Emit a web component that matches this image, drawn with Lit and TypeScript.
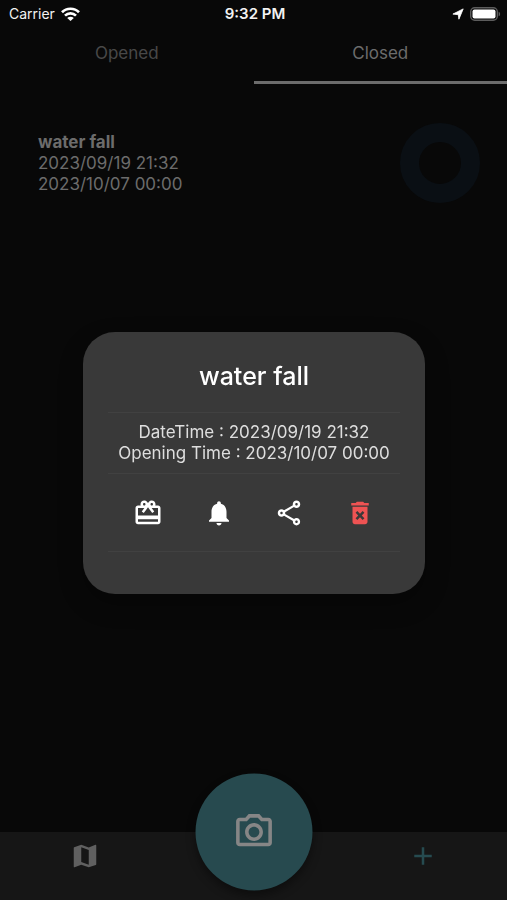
import { LitElement, html, css, svg } from "lit";
import { customElement, property, state } from "lit/decorators.js";
import { classMap } from "lit/directives/class-map.js";

const ICONS: Record<string, string> = {
  gift: "M20 6h-2.18c.11-.31.18-.65.18-1 0-1.66-1.34-3-3-3-1.05 0-1.96.54-2.5 1.35l-.5.67-.5-.68C10.96 2.54 10.05 2 9 2 7.34 2 6 3.34 6 5c0 .35.07.69.18 1H4c-1.11 0-1.99.89-1.99 2L2 19c0 1.11.89 2 2 2h16c1.11 0 2-.89 2-2V8c0-1.11-.89-2-2-2zm-5-2c.55 0 1 .45 1 1s-.45 1-1 1-1-.45-1-1 .45-1 1-1zM9 4c.55 0 1 .45 1 1s-.45 1-1 1-1-.45-1-1 .45-1 1-1zm11 15H4v-2h16v2zm0-5H4V8h5.08L7 10.83 8.62 12 11 8.76l1-1.36 1 1.36L15.38 12 17 10.83 14.92 8H20v6z",
  bell: "M12 22c1.1 0 2-.9 2-2h-4c0 1.1.89 2 2 2zm6-6v-5c0-3.07-1.64-5.64-4.5-6.32V4c0-.83-.67-1.5-1.5-1.5s-1.5.67-1.5 1.5v.68C7.63 5.36 6 7.92 6 11v5l-2 2v1h16v-1l-2-2z",
  share: "M18 16.08c-.76 0-1.44.3-1.96.77L8.91 12.7c.05-.23.09-.46.09-.7s-.04-.47-.09-.7l7.05-4.11c.54.5 1.25.81 2.04.81 1.66 0 3-1.34 3-3s-1.34-3-3-3-3 1.34-3 3c0 .24.04.47.09.7L8.04 9.81C7.5 9.31 6.79 9 6 9c-1.66 0-3 1.34-3 3s1.34 3 3 3c.79 0 1.5-.31 2.04-.81l7.12 4.16c-.05.21-.08.43-.08.65 0 1.61 1.31 2.92 2.92 2.92s2.92-1.31 2.92-2.92-1.31-2.92-2.92-2.92zM18 4c.55 0 1 .45 1 1s-.45 1-1 1-1-.45-1-1 .45-1 1-1zM6 13c-.55 0-1-.45-1-1s.45-1 1-1 1 .45 1 1-.45 1-1 1zm12 7.02c-.55 0-1-.45-1-1s.45-1 1-1 1 .45 1 1-.45 1-1 1z",
  trash: "M6 19c0 1.1.9 2 2 2h8c1.1 0 2-.9 2-2V7H6v12zm2.46-7.12l1.41-1.41L12 12.59l2.12-2.12 1.41 1.41L13.41 14l2.12 2.12-1.41 1.41L12 15.41l-2.12 2.12-1.41-1.41L10.59 14l-2.13-2.12zM15.5 4l-1-1h-5l-1 1H5v2h14V4z",
  camera: "M20 4h-3.17L15 2H9L7.17 4H4c-1.1 0-2 .9-2 2v12c0 1.1.9 2 2 2h16c1.1 0 2-.9 2-2V6c0-1.1-.9-2-2-2zm0 14H4V6h4.05l1.83-2h4.24l1.83 2H20v12zM12 7c-2.76 0-5 2.24-5 5s2.24 5 5 5 5-2.24 5-5-2.24-5-5-5zm0 8c-1.65 0-3-1.35-3-3s1.35-3 3-3 3 1.35 3 3-1.35 3-3 3z",
  map: "M20.5 3l-.16.03L15 5.1 9 3 3.36 4.9c-.21.07-.36.25-.36.48V20.5c0 .28.22.5.5.5l.16-.03L9 18.9l6 2.1 5.64-1.9c.21-.07.36-.25.36-.48V3.5c0-.28-.22-.5-.5-.5zM15 19l-6-2.11V5l6 2.11V19z",
  add: "M19 13h-6v6h-2v-6H5v-2h6V5h2v6h6v2z",
};

@customElement("app-icon")
export class AppIcon extends LitElement {
  @property() name = "";

  static styles = css`
    :host {
      display: block;
      width: 30px;
      height: 30px;
    }
    .glyph {
      display: block;
      width: 100%;
      height: 100%;
      fill: currentColor;
    }
  `;

  render() {
    return html`<svg class="glyph" viewBox="0 0 24 24" aria-hidden="true">
      ${svg`<path d=${ICONS[this.name] ?? ""}></path>`}
    </svg>`;
  }
}

@customElement("status-bar")
export class StatusBar extends LitElement {
  static styles = css`
    :host {
      display: grid;
      grid-template-columns: 1fr auto 1fr;
      align-items: center;
      height: 27px;
      padding: 0 6px 0 9px;
      box-sizing: border-box;
      color: #f2f2f2;
      font-size: 14px;
      line-height: 18px;
    }
    .side {
      display: flex;
      align-items: center;
      gap: 6px;
    }
    .end {
      justify-content: flex-end;
    }
    .time {
      font-size: 15px;
      font-weight: 600;
    }
    .wifi {
      width: 19px;
      height: 14px;
    }
    .arrow {
      width: 12px;
      height: 12px;
    }
    .battery {
      width: 31px;
      height: 14px;
    }
  `;

  render() {
    return html`
      <div class="side">
        <span>Carrier</span>
        <svg class="wifi" viewBox="0 0 19 14" aria-label="Wi-Fi">
          <g fill="none" stroke="#fff" stroke-width="2.7">
            <path d="M1 5.2C5.6.6 13.400.6 18 5.200"></path>
            <path d="M4 8.600C7.100 5.600 11.900 5.600 15 8.600"></path>
          </g>
          <path d="M9.500 14L6.200 10.900C8 9.200 11 9.200 12.800 10.900Z" fill="#fff"></path>
        </svg>
      </div>
      <span class="time">9:32 PM</span>
      <div class="side end">
        <svg class="arrow" viewBox="0 0 12 12" aria-label="Location">
          <path
            d="M11.200.9L6.900 11.200L6.300 6.700L.9 6.100Z"
            fill="#fff"
            stroke="#fff"
            stroke-width=".8"
            stroke-linejoin="round"
          ></path>
        </svg>
        <svg class="battery" viewBox="0 0 31 14" aria-label="Battery">
          <rect x=".7" y=".7" width="26.600" height="12.600" rx="4" fill="none" stroke="#5c5c5c" stroke-width="1.400"></rect>
          <rect x="2.500" y="2.500" width="23" height="9" rx="2" fill="#fff"></rect>
          <path d="M28.600 4.700C30.600 5.300 30.600 8.700 28.600 9.300Z" fill="#5c5c5c"></path>
        </svg>
      </div>
    `;
  }
}

interface Capsule {
  title: string;
  created: string;
  opens: string;
}

@customElement("capsule-dialog")
export class CapsuleDialog extends LitElement {
  @property({ attribute: false }) capsule!: Capsule;

  static styles = css`
    :host {
      display: block;
      box-sizing: border-box;
      padding: 0 25px 42px;
      border-radius: 32px;
      background: #393939;
      color: #fff;
      text-align: center;
      box-shadow: 0 10px 24px rgba(0, 0, 0, 0.3);
    }
    .title {
      margin: 0;
      padding: 28px 0 20px;
      font-size: 25px;
      line-height: 32px;
      font-weight: 500;
    }
    .times {
      padding: 9px 0;
      border-top: 1px solid #414141;
      border-bottom: 1px solid #414141;
      color: #dedede;
      font-size: 17px;
      line-height: 21px;
    }
    .line {
      margin: 0;
    }
    .actions {
      display: flex;
      justify-content: space-evenly;
      padding: 8px 0;
      border-bottom: 1px solid #414141;
    }
    .action {
      display: grid;
      place-items: center;
      width: 60px;
      height: 61px;
      padding: 0;
      border: 0;
      background: none;
      color: #fff;
    }
    .danger {
      color: #ee5353;
    }
  `;

  render() {
    const actions = [
      { icon: "gift", label: "Open" },
      { icon: "bell", label: "Remind" },
      { icon: "share", label: "Share" },
      { icon: "trash", label: "Delete" },
    ];
    return html`
      <h2 class="title">${this.capsule.title}</h2>
      <div class="times">
        <p class="line">DateTime : ${this.capsule.created}</p>
        <p class="line">Opening Time : ${this.capsule.opens}</p>
      </div>
      <div class="actions">
        ${actions.map(
          (a) => html`<button
            class=${classMap({ action: true, danger: a.icon === "trash" })}
            aria-label=${a.label}
          >
            <app-icon name=${a.icon}></app-icon>
          </button>`
        )}
      </div>
    `;
  }
}

@customElement("app-root")
export class AppRoot extends LitElement {
  @state() private tab = "Closed";

  private capsule: Capsule = {
    title: "water fall",
    created: "2023/09/19 21:32",
    opens: "2023/10/07 00:00",
  };

  static styles = css`
    :host {
      display: flex;
      flex-direction: column;
      min-height: 100vh;
      background: #080808;
      font-family: Inter, "Liberation Sans", sans-serif;
    }
    button {
      font-family: inherit;
    }
    .tabs {
      display: grid;
      grid-template-columns: 1fr 1fr;
    }
    .tab {
      height: 57px;
      padding: 0 0 2px;
      border: 0;
      border-bottom: 3px solid transparent;
      background: none;
      color: #484848;
      font-size: 17px;
      line-height: 20px;
    }
    .selected {
      color: #6c6c6c;
      border-bottom-color: #6c6c6c;
    }
    .list {
      flex: 1;
      padding: 39px 27px 0 38px;
    }
    .item {
      display: flex;
      align-items: center;
      justify-content: space-between;
      color: #6c6c6c;
      font-size: 17px;
      line-height: 21px;
    }
    .name,
    .date {
      margin: 0;
      font-size: 17px;
    }
    .name {
      font-weight: 700;
    }
    .ring {
      width: 80px;
      height: 80px;
      box-sizing: border-box;
      border: 19px solid #0a0f14;
      border-radius: 50%;
    }
    .nav {
      position: relative;
      display: grid;
      grid-template-columns: 1fr 1fr 1fr;
      padding-bottom: 20px;
      background: #161616;
    }
    .nav-button {
      display: grid;
      place-items: center;
      height: 48px;
      padding: 0;
      border: 0;
      background: none;
      color: #606060;
    }
    .add {
      grid-column: 3;
      color: #264b50;
    }
    .capture {
      position: absolute;
      left: 50%;
      top: 0;
      transform: translate(-50%, -50%);
      display: grid;
      place-items: center;
      width: 117px;
      height: 117px;
      padding: 0;
      border: 0;
      border-radius: 50%;
      background: #274a4f;
      color: #868686;
      box-shadow: 0 5px 10px rgba(0, 0, 0, 0.4);
    }
    .capture-icon {
      width: 43px;
      height: 43px;
    }
    .overlay {
      position: fixed;
      inset: 26px 0 0;
      display: flex;
      align-items: center;
      padding: 0 82px 0 83px;
    }
    .dialog {
      flex: 1;
      min-width: 0;
    }
  `;

  render() {
    const { title, created, opens } = this.capsule;
    return html`
      <status-bar></status-bar>
      <div class="tabs" role="tablist">
        ${["Opened", "Closed"].map(
          (name) => html`<button
            role="tab"
            aria-selected=${this.tab === name}
            class=${classMap({ tab: true, selected: this.tab === name })}
            @click=${() => (this.tab = name)}
          >${name}</button>`
        )}
      </div>
      <main class="list">
        <article class="item">
          <div>
            <h3 class="name">${title}</h3>
            <p class="date">${created}</p>
            <p class="date">${opens}</p>
          </div>
          <div class="ring"></div>
        </article>
      </main>
      <nav class="nav">
        <button class="nav-button" aria-label="Map"><app-icon name="map"></app-icon></button>
        <button class="nav-button add" aria-label="Add"><app-icon name="add"></app-icon></button>
        <button class="capture" aria-label="Camera">
          <app-icon class="capture-icon" name="camera"></app-icon>
        </button>
      </nav>
      <div class="overlay">
        <capsule-dialog class="dialog" role="dialog" aria-label=${title} .capsule=${this.capsule}></capsule-dialog>
      </div>
    `;
  }
}
